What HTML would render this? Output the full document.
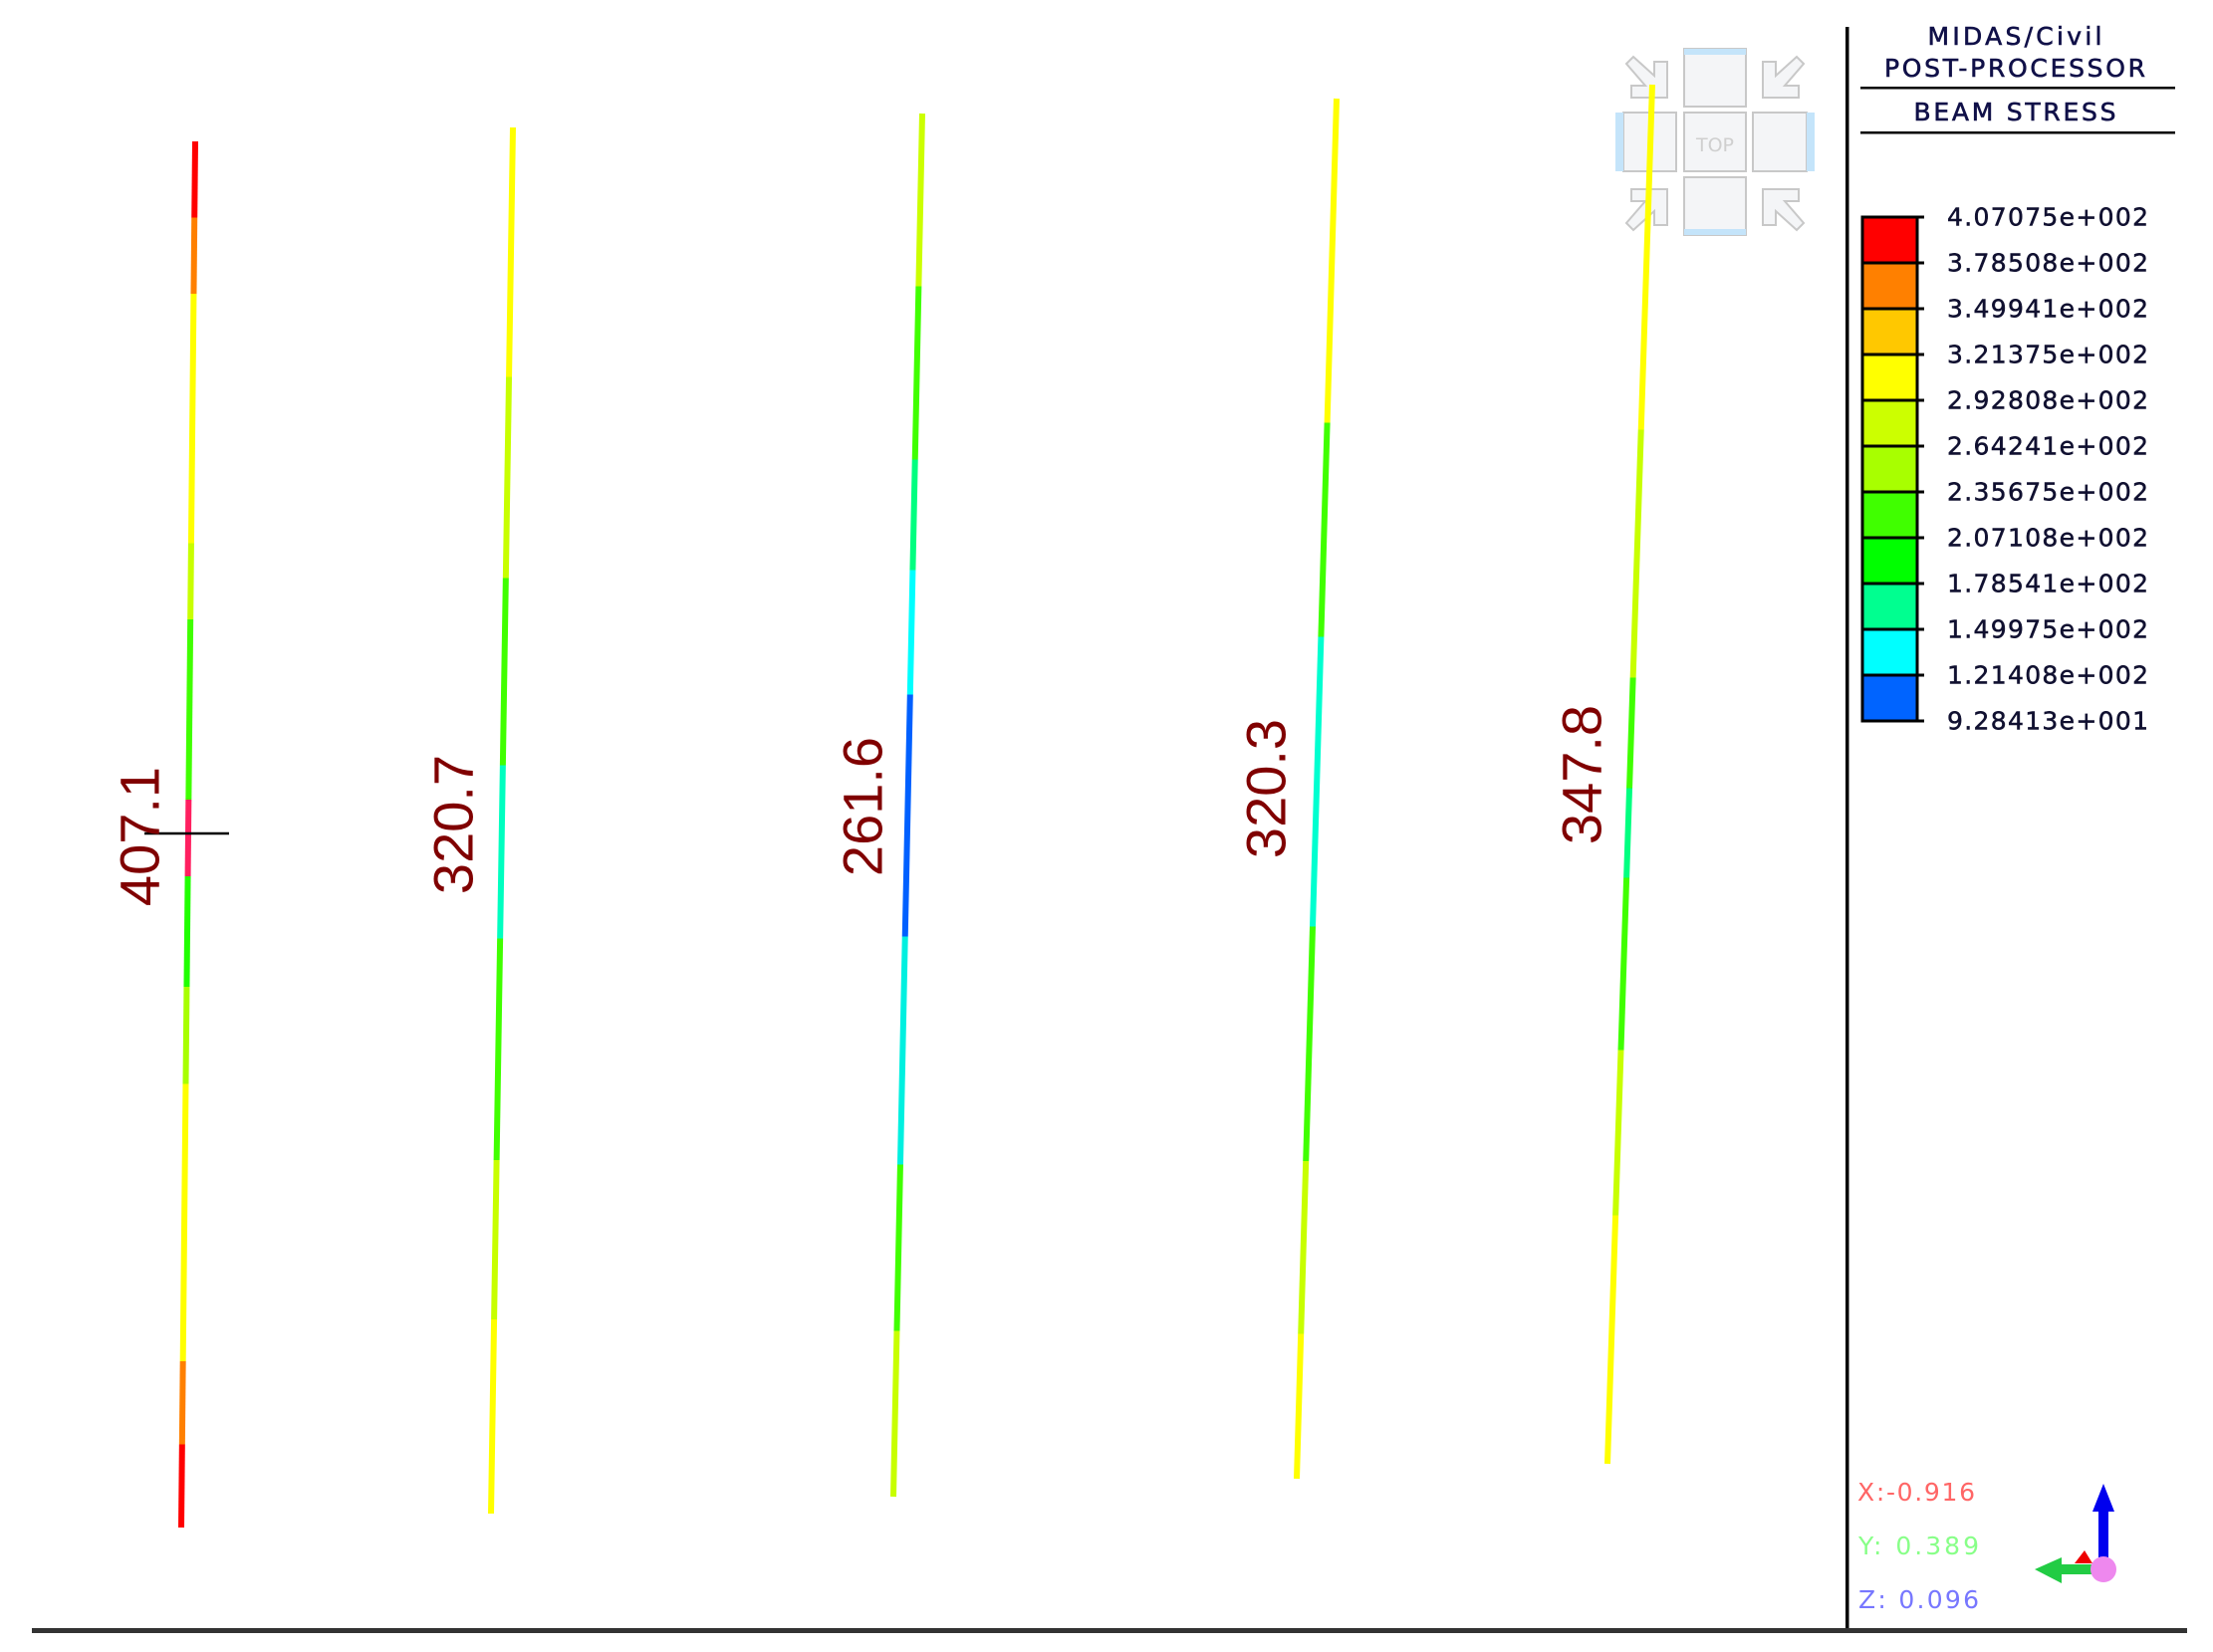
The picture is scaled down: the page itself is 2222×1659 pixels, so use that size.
<!DOCTYPE html>
<html><head><meta charset="utf-8"><style>
html,body{margin:0;padding:0;background:#fff;}
svg{display:block;}
</style></head><body>
<svg width="2222" height="1659" viewBox="0 0 2222 1659" xmlns="http://www.w3.org/2000/svg">
<defs>
<linearGradient id="g1" gradientUnits="userSpaceOnUse" x1="0" y1="142" x2="0" y2="1534">
<stop offset="0" stop-color="#ff0000"/><stop offset="0.055" stop-color="#ff0000"/>
<stop offset="0.055" stop-color="#ff8000"/><stop offset="0.11" stop-color="#ff8000"/>
<stop offset="0.11" stop-color="#ffff00"/><stop offset="0.29" stop-color="#ffff00"/>
<stop offset="0.29" stop-color="#c8ff00"/><stop offset="0.345" stop-color="#c8ff00"/>
<stop offset="0.345" stop-color="#40ff00"/><stop offset="0.475" stop-color="#40ff00"/>
<stop offset="0.475" stop-color="#ff2060"/><stop offset="0.53" stop-color="#ff2060"/>
<stop offset="0.53" stop-color="#20ff00"/><stop offset="0.61" stop-color="#20ff00"/>
<stop offset="0.61" stop-color="#a8ff00"/><stop offset="0.68" stop-color="#a8ff00"/>
<stop offset="0.68" stop-color="#ffff00"/><stop offset="0.88" stop-color="#ffff00"/>
<stop offset="0.88" stop-color="#ff8000"/><stop offset="0.94" stop-color="#ff8000"/>
<stop offset="0.94" stop-color="#ff0000"/><stop offset="1" stop-color="#ff0000"/>
</linearGradient>
<linearGradient id="g2" gradientUnits="userSpaceOnUse" x1="0" y1="128" x2="0" y2="1520">
<stop offset="0" stop-color="#ffff00"/><stop offset="0.18" stop-color="#ffff00"/>
<stop offset="0.18" stop-color="#c8ff00"/><stop offset="0.325" stop-color="#c8ff00"/>
<stop offset="0.325" stop-color="#40ff00"/><stop offset="0.46" stop-color="#40ff00"/>
<stop offset="0.46" stop-color="#00ffc0"/><stop offset="0.585" stop-color="#00ffc0"/>
<stop offset="0.585" stop-color="#40ff00"/><stop offset="0.745" stop-color="#40ff00"/>
<stop offset="0.745" stop-color="#c8ff00"/><stop offset="0.86" stop-color="#c8ff00"/>
<stop offset="0.86" stop-color="#ffff00"/><stop offset="1" stop-color="#ffff00"/>
</linearGradient>
<linearGradient id="g3" gradientUnits="userSpaceOnUse" x1="0" y1="114" x2="0" y2="1503">
<stop offset="0" stop-color="#ccff00"/><stop offset="0.125" stop-color="#ccff00"/>
<stop offset="0.125" stop-color="#40ff00"/><stop offset="0.25" stop-color="#40ff00"/>
<stop offset="0.25" stop-color="#00ff80"/><stop offset="0.33" stop-color="#00ff80"/>
<stop offset="0.33" stop-color="#00ffff"/><stop offset="0.42" stop-color="#00ffff"/>
<stop offset="0.42" stop-color="#0060ff"/><stop offset="0.595" stop-color="#0060ff"/>
<stop offset="0.595" stop-color="#00f0e0"/><stop offset="0.76" stop-color="#00f0e0"/>
<stop offset="0.76" stop-color="#40ff00"/><stop offset="0.88" stop-color="#40ff00"/>
<stop offset="0.88" stop-color="#c8ff00"/><stop offset="1" stop-color="#c8ff00"/>
</linearGradient>
<linearGradient id="g4" gradientUnits="userSpaceOnUse" x1="0" y1="99" x2="0" y2="1485">
<stop offset="0" stop-color="#ffff00"/><stop offset="0.235" stop-color="#ffff00"/>
<stop offset="0.235" stop-color="#40ff00"/><stop offset="0.39" stop-color="#40ff00"/>
<stop offset="0.39" stop-color="#00ffd0"/><stop offset="0.6" stop-color="#00ffd0"/>
<stop offset="0.6" stop-color="#40ff00"/><stop offset="0.77" stop-color="#40ff00"/>
<stop offset="0.77" stop-color="#c8ff00"/><stop offset="0.895" stop-color="#c8ff00"/>
<stop offset="0.895" stop-color="#ffff00"/><stop offset="1" stop-color="#ffff00"/>
</linearGradient>
<linearGradient id="g5" gradientUnits="userSpaceOnUse" x1="0" y1="85" x2="0" y2="1470">
<stop offset="0" stop-color="#ffff00"/><stop offset="0.25" stop-color="#ffff00"/>
<stop offset="0.25" stop-color="#c8ff00"/><stop offset="0.43" stop-color="#c8ff00"/>
<stop offset="0.43" stop-color="#40ff00"/><stop offset="0.51" stop-color="#40ff00"/>
<stop offset="0.51" stop-color="#00ff80"/><stop offset="0.575" stop-color="#00ff80"/>
<stop offset="0.575" stop-color="#40ff00"/><stop offset="0.7" stop-color="#40ff00"/>
<stop offset="0.7" stop-color="#c8ff00"/><stop offset="0.82" stop-color="#c8ff00"/>
<stop offset="0.82" stop-color="#ffff00"/><stop offset="1" stop-color="#ffff00"/>
</linearGradient>
</defs>

<!-- nav cube -->
<g stroke="#c8c8c8" stroke-width="2" fill="#f4f5f7">
<rect x="1691" y="49" width="62" height="58"/>
<rect x="1630" y="113" width="53" height="59"/>
<rect x="1691" y="113" width="62" height="59"/>
<rect x="1760" y="113" width="54" height="59"/>
<rect x="1691" y="178" width="62" height="58"/>
<polygon points="1633,64 1640,57 1661,76 1661,62 1674,62 1674,98 1638,98 1638,86 1652,86"/>
<polygon points="1811,64 1804,57 1783,76 1783,62 1770,62 1770,98 1806,98 1806,86 1792,86"/>
<polygon points="1633,224 1640,231 1661,212 1661,226 1674,226 1674,190 1638,190 1638,202 1652,202"/>
<polygon points="1811,224 1804,231 1783,212 1783,226 1770,226 1770,190 1806,190 1806,202 1792,202"/>
</g>
<g fill="#c4e4fa">
<rect x="1691" y="49" width="62" height="6"/>
<rect x="1691" y="230" width="62" height="6"/>
<rect x="1622" y="113" width="8" height="59"/>
<rect x="1814" y="113" width="8" height="59"/>
</g>
<text x="1722" y="152" text-anchor="middle" font-family="DejaVu Sans, sans-serif" font-size="19" fill="#cfcfcf">TOP</text>

<!-- beams -->
<g stroke-width="6" stroke-linecap="butt">
<line x1="196" y1="142" x2="182" y2="1534" stroke="url(#g1)"/>
<line x1="515" y1="128" x2="493" y2="1520" stroke="url(#g2)"/>
<line x1="926" y1="114" x2="897" y2="1503" stroke="url(#g3)"/>
<line x1="1342" y1="99" x2="1302" y2="1485" stroke="url(#g4)"/>
<line x1="1659" y1="85" x2="1614" y2="1470" stroke="url(#g5)"/>
</g>
<line x1="145" y1="837" x2="230" y2="837" stroke="#000" stroke-width="2.5"/>

<!-- labels -->
<g font-family="Liberation Sans, sans-serif" font-size="56" fill="#800000" text-anchor="middle" dominant-baseline="central">
<text transform="translate(140,840) rotate(-90)">407.1</text>
<text transform="translate(455,828) rotate(-90)">320.7</text>
<text transform="translate(866,810) rotate(-90)">261.6</text>
<text transform="translate(1271,792) rotate(-90)">320.3</text>
<text transform="translate(1588,778) rotate(-90)">347.8</text>
</g>

<!-- separator and bottom -->
<rect x="1853" y="27" width="3.5" height="1610" fill="#000"/>
<rect x="32" y="1635" width="2164" height="5" fill="#333"/>

<!-- legend header -->
<g font-family="DejaVu Sans, sans-serif" font-size="25" fill="#101048" stroke="#101048" stroke-width="0.6" text-anchor="middle">
<text x="2023" y="45" textLength="175">MIDAS/Civil</text>
<text x="2023" y="77" textLength="262">POST-PROCESSOR</text>
<text x="2023" y="121" textLength="203">BEAM  STRESS</text>
</g>
<rect x="1868" y="87" width="316" height="2.5" fill="#000"/>
<rect x="1868" y="132" width="316" height="2.5" fill="#000"/>

<!-- color bar -->
<g stroke="#000" stroke-width="3">
<rect x="1870" y="218" width="55" height="46" fill="#ff0000"/>
<rect x="1870" y="264" width="55" height="46" fill="#ff8000"/>
<rect x="1870" y="310" width="55" height="46" fill="#ffc800"/>
<rect x="1870" y="356" width="55" height="46" fill="#ffff00"/>
<rect x="1870" y="402" width="55" height="46" fill="#ccff00"/>
<rect x="1870" y="448" width="55" height="46" fill="#a8ff00"/>
<rect x="1870" y="494" width="55" height="46" fill="#40ff00"/>
<rect x="1870" y="540" width="55" height="46" fill="#00ff00"/>
<rect x="1870" y="586" width="55" height="46" fill="#00ff90"/>
<rect x="1870" y="632" width="55" height="46" fill="#00ffff"/>
<rect x="1870" y="678" width="55" height="46" fill="#0064ff"/>
<line x1="1925" y1="218" x2="1932" y2="218"/><line x1="1925" y1="264" x2="1932" y2="264"/>
<line x1="1925" y1="310" x2="1932" y2="310"/><line x1="1925" y1="356" x2="1932" y2="356"/>
<line x1="1925" y1="402" x2="1932" y2="402"/><line x1="1925" y1="448" x2="1932" y2="448"/>
<line x1="1925" y1="494" x2="1932" y2="494"/><line x1="1925" y1="540" x2="1932" y2="540"/>
<line x1="1925" y1="586" x2="1932" y2="586"/><line x1="1925" y1="632" x2="1932" y2="632"/>
<line x1="1925" y1="678" x2="1932" y2="678"/><line x1="1925" y1="724" x2="1932" y2="724"/>
</g>
<g font-family="DejaVu Sans, sans-serif" font-size="25" fill="#101030" stroke="#101030" stroke-width="0.5" dominant-baseline="central">
<text x="1955" y="218" textLength="202">4.07075e+002</text>
<text x="1955" y="264" textLength="202">3.78508e+002</text>
<text x="1955" y="310" textLength="202">3.49941e+002</text>
<text x="1955" y="356" textLength="202">3.21375e+002</text>
<text x="1955" y="402" textLength="202">2.92808e+002</text>
<text x="1955" y="448" textLength="202">2.64241e+002</text>
<text x="1955" y="494" textLength="202">2.35675e+002</text>
<text x="1955" y="540" textLength="202">2.07108e+002</text>
<text x="1955" y="586" textLength="202">1.78541e+002</text>
<text x="1955" y="632" textLength="202">1.49975e+002</text>
<text x="1955" y="678" textLength="202">1.21408e+002</text>
<text x="1955" y="724" textLength="202">9.28413e+001</text>
</g>

<!-- coordinates -->
<g font-family="DejaVu Sans, sans-serif" font-size="25">
<text x="1865" y="1507" fill="#ff6666" textLength="118">X:-0.916</text>
<text x="1866" y="1561" fill="#88ff88" textLength="121">Y: 0.389</text>
<text x="1866" y="1615" fill="#7777ff" textLength="121">Z: 0.096</text>
</g>

<!-- axis triad -->
<rect x="2107" y="1518" width="10" height="60" fill="#0000ee"/>
<polygon points="2112,1490 2101,1518 2123,1518" fill="#0000ee"/>
<rect x="2070" y="1571" width="42" height="10" fill="#22cc44"/>
<polygon points="2043,1576 2070,1564 2070,1590" fill="#22cc44"/>
<polygon points="2083,1570 2093,1557 2101,1570" fill="#ee0000"/>
<circle cx="2112" cy="1576" r="13" fill="#ee88ee"/>
</svg>
</body></html>
